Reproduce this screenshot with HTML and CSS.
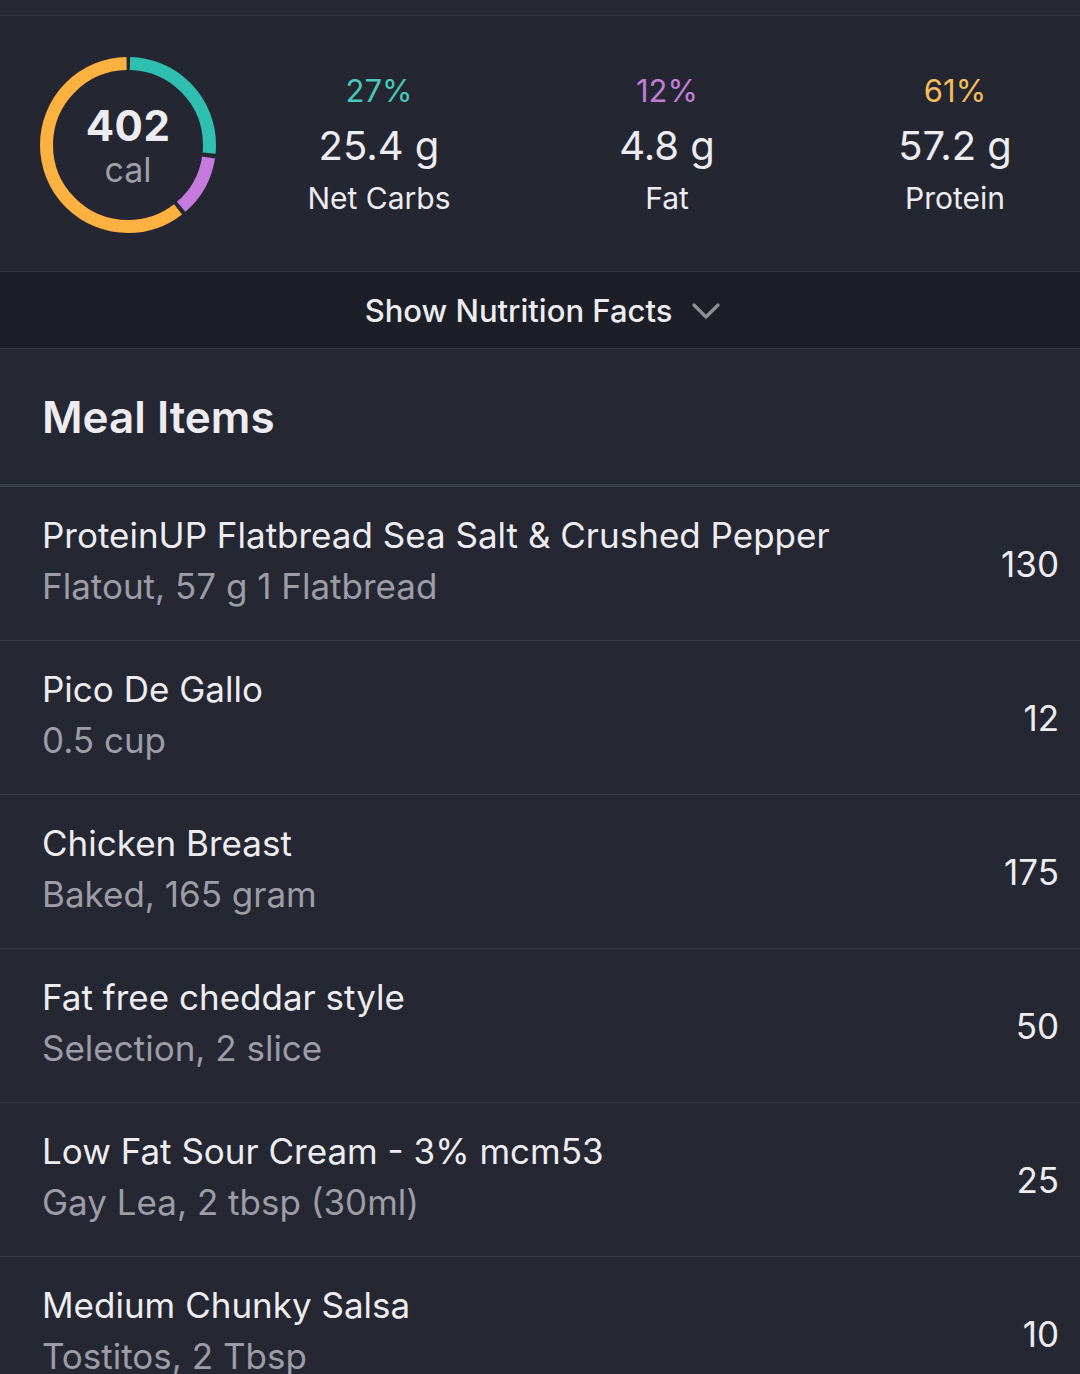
FILE: index.html
```html
<!DOCTYPE html>
<html>
<head>
<meta charset="utf-8">
<link rel="stylesheet" href="styles.css">
</head>
<body>
<div class="app">
  <div class="topstrip"></div>
  <section class="macros">
    <div class="ring">
      <svg width="180" height="180" viewBox="0 0 180 180">
        <g transform="rotate(-90 90 90)">
          <circle class="seg teal" cx="90" cy="90" r="81.5" stroke-dasharray="134 378.1" stroke-dashoffset="-2"></circle>
          <circle class="seg purple" cx="90" cy="90" r="81.5" stroke-dasharray="57.5 454.6" stroke-dashoffset="-140.3"></circle>
          <circle class="seg orange" cx="90" cy="90" r="81.5" stroke-dasharray="308 204.1" stroke-dashoffset="-201.8"></circle>
        </g>
      </svg>
      <div class="ring-label">
        <div class="cal-num">402</div>
        <div class="cal-unit">cal</div>
      </div>
    </div>
    <div class="macro">
      <div class="pct pct-teal">27%</div>
      <div class="amt">25.4 g</div>
      <div class="name">Net Carbs</div>
    </div>
    <div class="macro">
      <div class="pct pct-purple">12%</div>
      <div class="amt">4.8 g</div>
      <div class="name">Fat</div>
    </div>
    <div class="macro">
      <div class="pct pct-orange">61%</div>
      <div class="amt">57.2 g</div>
      <div class="name">Protein</div>
    </div>
  </section>
  <div class="facts-bar">
    <span>Show Nutrition Facts</span>
    <svg class="chev" width="30" height="20" viewBox="0 0 30 20"><path d="M3 4 L15 16 L27 4" fill="none" stroke="#8e8f97" stroke-width="3.2" stroke-linecap="round" stroke-linejoin="round"/></svg>
  </div>
  <div class="meal-head">Meal Items</div>
  <ul class="items">
    <li class="item"><div class="info"><div class="iname">ProteinUP Flatbread Sea Salt &amp; Crushed Pepper</div><div class="isub">Flatout, 57 g 1 Flatbread</div></div><div class="kcal">130</div></li>
    <li class="item"><div class="info"><div class="iname">Pico De Gallo</div><div class="isub">0.5 cup</div></div><div class="kcal">12</div></li>
    <li class="item"><div class="info"><div class="iname">Chicken Breast</div><div class="isub">Baked, 165 gram</div></div><div class="kcal">175</div></li>
    <li class="item"><div class="info"><div class="iname">Fat free cheddar style</div><div class="isub">Selection, 2 slice</div></div><div class="kcal">50</div></li>
    <li class="item"><div class="info"><div class="iname">Low Fat Sour Cream - 3% mcm53</div><div class="isub">Gay Lea, 2 tbsp (30ml)</div></div><div class="kcal">25</div></li>
    <li class="item"><div class="info"><div class="iname">Medium Chunky Salsa</div><div class="isub">Tostitos, 2 Tbsp</div></div><div class="kcal">10</div></li>
  </ul>
</div>
</body>
</html>
```
FILE: styles.css
```css
* { box-sizing: border-box; }
html, body { margin: 0; padding: 0; }
body {
  background: #252732;
  font-family: Inter, "Noto Sans", "Liberation Sans", sans-serif;
  color: #ececf1;
  width: 1080px;
  height: 1374px;
  overflow: hidden;
}
.app { width: 1080px; }
.topstrip {
  height: 16px;
  background: #262833;
  border-bottom: 1px solid #343744;
}
.macros {
  height: 256px;
  width: 1099px;
  background: #242631;
  border-bottom: 1px solid #30333f;
  display: grid;
  grid-template-columns: 197px 288px 288px 288px;
  align-items: center;
  padding-left: 38px;
}
.ring {
  position: relative;
  width: 180px;
  height: 180px;
  margin-top: 2px;
}
.ring svg { display: block; }
.seg { fill: none; stroke-width: 13; }
.teal { stroke: #2ebfb1; }
.purple { stroke: #c77ade; }
.orange { stroke: #fdb140; }
.ring-label {
  position: absolute;
  inset: 0;
  display: flex;
  flex-direction: column;
  align-items: center;
  justify-content: center;
  padding-top: 2px;
}
.cal-num { font-size: 42px; font-weight: 700; line-height: 48px; color: #ededf1; letter-spacing: 0.5px; }
.cal-unit { font-size: 34px; line-height: 40px; color: #9d9ea6; }
.macro {
  display: flex;
  flex-direction: column;
  align-items: center;
  margin-top: -2px;
}
.pct { font-size: 31px; line-height: 40px; }
.pct-teal { color: #48c8b9; }
.pct-purple { color: #c17ed6; }
.pct-orange { color: #f5bd5c; }
.amt { font-size: 40px; line-height: 70px; color: #ededf1; }
.name { font-size: 30px; line-height: 34px; color: #ededf1; }
.facts-bar {
  height: 77px;
  background: #1d1f28;
  border-bottom: 1px solid #333643;
  display: flex;
  align-items: center;
  justify-content: center;
  gap: 19px;
  font-size: 31px;
  font-weight: 500;
  color: #ededf1;
  padding-left: 6px;
}
.chev { margin-top: 2px; }
.meal-head {
  height: 138px;
  display: flex;
  align-items: center;
  padding-left: 42px;
  font-size: 44px;
  font-weight: 600;
  color: #ededf1;
  border-bottom: 3px solid #3a3d4a;
}
.items { list-style: none; margin: 0; padding: 0; }
.item {
  height: 154px;
  display: flex;
  align-items: center;
  justify-content: space-between;
  padding: 0 21px 0 42px;
  border-bottom: 1px solid #363947;
}
.info { display: flex; flex-direction: column; margin-top: -6px; }
.iname { font-size: 35px; line-height: 51px; color: #ededf1; }
.isub { font-size: 35px; line-height: 51px; color: #9c9da6; }
.kcal { font-size: 35px; color: #ededf1; }
```
